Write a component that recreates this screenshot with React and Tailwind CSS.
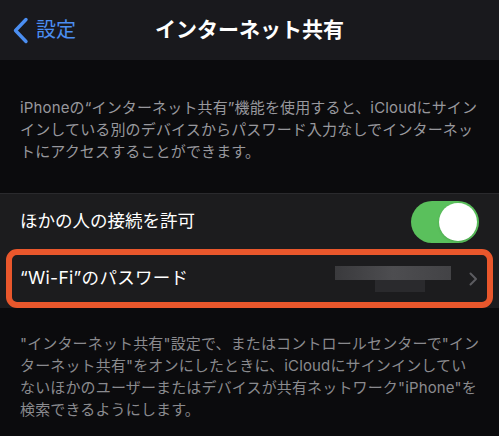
import React, { useState } from "react";

export default function App() {
  const [allow, setAllow] = useState(true);

  return (
    <div className="w-[499px] h-[436px] overflow-hidden bg-[#0b0b0d] font-['Inter','Noto_Sans_CJK_JP',sans-serif]">
      {/* nav bar */}
      <header className="grid h-[60px] grid-cols-[1fr_auto_1fr] items-center bg-[#19191d]">
        <button className="flex items-center gap-[7px] pl-[12px] text-[#4b8ef1]">
          <svg width="17" height="27" viewBox="0 0 17 27" fill="none">
            <path d="M14 2.5 L3.5 13.5 L14 24.5" stroke="currentColor" strokeWidth="3.4" strokeLinecap="round" strokeLinejoin="round" />
          </svg>
          <span className="text-[20px] leading-none">設定</span>
        </button>
        <h1 className="text-[21px] font-bold text-white">インターネット共有</h1>
        <div />
      </header>

      <p className="pl-5 pr-[10px] pt-[37px] text-[15px] leading-[22px] tracking-[0.15px] text-[#98989d]">
        iPhoneの“インターネット共有”機能を使用すると、iCloudにサイン
        <br />
        インしている別のデバイスからパスワード入力なしでインターネッ
        <br />
        トにアクセスすることができます。
      </p>

      <div className="mt-[30px] bg-[#1c1c1e]">
        <div className="flex h-[56px] items-center justify-between border-t border-[#2a2a2d] pl-5 pr-[20px]">
          <span className="text-[17.5px] text-white">ほかの人の接続を許可</span>
          <button
            onClick={() => setAllow(!allow)}
            className={`flex h-[42px] w-[68px] items-center rounded-full p-[2px] ${allow ? "justify-end bg-[#5ac05c]" : "justify-start bg-[#39393d]"}`}
          >
            <span className="h-[38px] w-[38px] rounded-full bg-white shadow" />
          </button>
        </div>
        <div className="mx-[6px] flex h-[59px] items-center justify-between rounded-[11px] border-[6px] border-[#e9572c] pl-[8px] pr-[9px]">
          <span className="text-[17.5px] tracking-[0.3px] text-white">“Wi-Fi”のパスワード</span>
          <div className="flex items-center gap-[18px]">
            <div className="flex flex-col">
              <div className="h-[14px] w-[116px] bg-gradient-to-r from-[#3a3a3d] via-[#4d4d50] to-[#434346]" />
              <div className="ml-[40px] h-[12px] w-[50px] bg-[#2a2a2d]" />
            </div>
            <svg width="9" height="14" viewBox="0 0 9 14" fill="none">
              <path d="M1.5 1.5 L7 7 L1.5 12.5" stroke="#5c5c60" strokeWidth="2" strokeLinecap="round" strokeLinejoin="round" />
            </svg>
          </div>
        </div>
      </div>

      <p className="pl-5 pr-[10px] pt-[25px] text-[15px] leading-[22px] tracking-[0.15px] text-[#8a8a8e]">
        "インターネット共有"設定で、またはコントロールセンターで"イン
        <br />
        ターネット共有"をオンにしたときに、iCloudにサインインしてい
        <br />
        ないほかのユーザーまたはデバイスが共有ネットワーク"iPhone"を
        <br />
        検索できるようにします。
      </p>
    </div>
  );
}
